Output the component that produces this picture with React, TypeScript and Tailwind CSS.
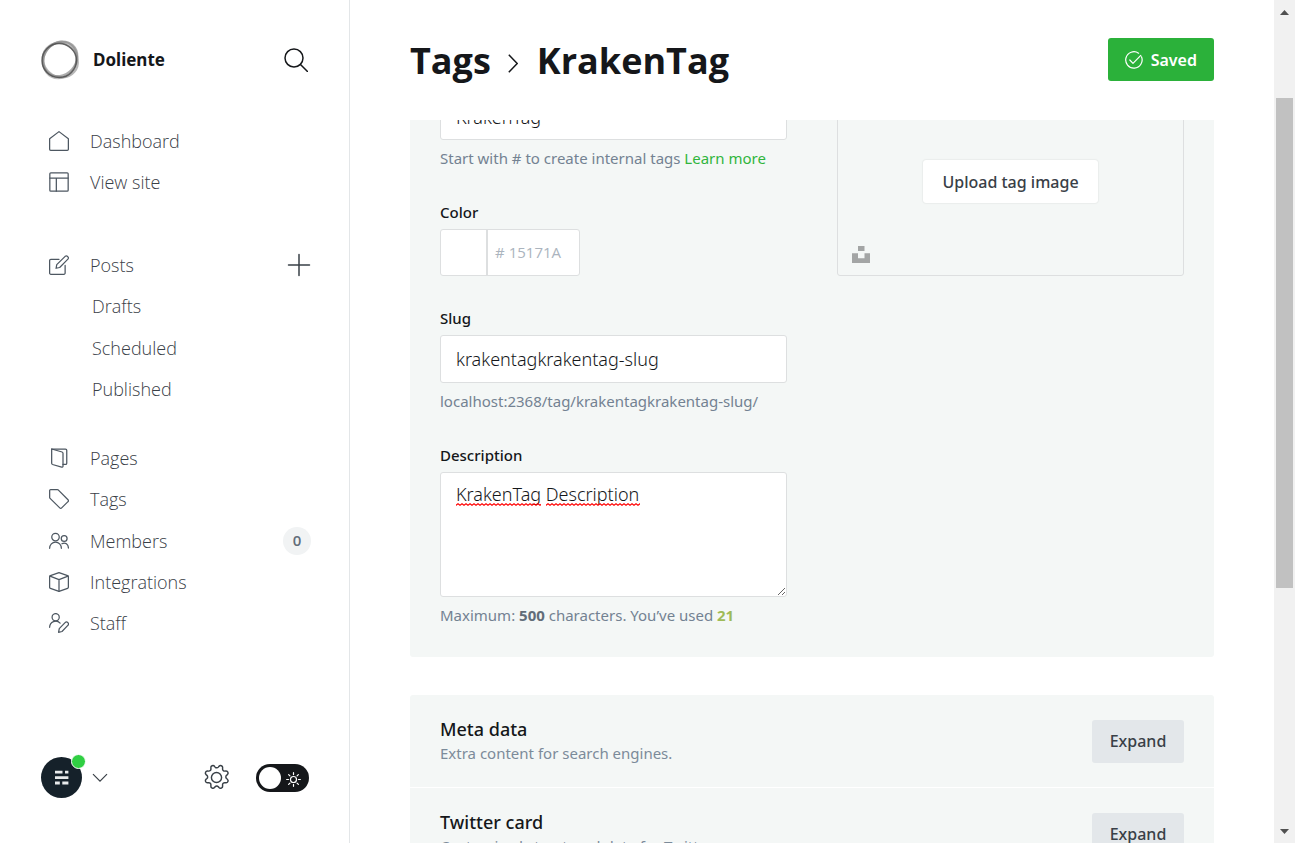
import React, { useState } from 'react';

type IconProps = { children: React.ReactNode; className?: string };

function Icon({ children, className = 'size-5' }: IconProps) {
  return (
    <svg
      viewBox="0 0 24 24"
      fill="none"
      stroke="currentColor"
      strokeWidth="1.5"
      strokeLinecap="round"
      strokeLinejoin="round"
      className={className}
      aria-hidden="true"
    >
      {children}
    </svg>
  );
}

const icons = {
  dashboard: <path d="M.75 9.2 12 .75 23.25 9.2v12.8a1.2 1.2 0 0 1-1.2 1.2H1.95A1.2 1.2 0 0 1 .75 22z" />,
  site: (
    <>
      <rect x="1" y="1" width="22" height="22" rx="1.2" />
      <path d="M1 7.2h22M8.8 7.2V23" />
    </>
  ),
  posts: (
    <>
      <path d="M12 5.2H2.2A1.5 1.5 0 0 0 .75 6.7v14.9a1.5 1.5 0 0 0 1.5 1.6h15.6a1.5 1.5 0 0 0 1.5-1.6v-9" />
      <path d="m12.8 15-4.3.9.8-4.3L19.4 1.6a2.4 2.4 0 0 1 3.3 3.4z" />
    </>
  ),
  pages: (
    <>
      <path d="M3.2 1.2v17.2c0 .7.4 1.2 1 1.4l11 3.2c.8.2 1.6-.3 1.6-1.2V6.2c0-.7-.4-1.2-1.1-1.4z" />
      <path d="M3.2 1.2h16.6a1.5 1.5 0 0 1 1.5 1.5v15.5a1.5 1.5 0 0 1-1.5 1.5h-3" />
    </>
  ),
  tags: <path d="M.8 1.9v8.2c0 .5.2.9.5 1.2l11.6 11.3c.7.7 1.7.7 2.3 0l7.6-7.4c.7-.6.7-1.6 0-2.3L11.3 1.3A2 2 0 0 0 10 .8H1.9A1.1 1.1 0 0 0 .8 1.9z" />,
  members: (
    <>
      <circle cx="7.8" cy="7.3" r="4.5" />
      <path d="M.75 20.8a7.05 7.6 0 0 1 14.1 0" />
      <circle cx="18.2" cy="9" r="3.5" />
      <path d="M15.5 15.3c4-2.3 7.8.8 7.8 5.1" />
    </>
  ),
  integrations: (
    <>
      <path d="M12 .8 22.3 4.4c.6.2.95.6.95 1.2v12.8c0 .6-.4 1-.95 1.2L12 23.2 1.7 19.6a1.2 1.2 0 0 1-.95-1.2V5.6c0-.6.35-1 .95-1.2z" />
      <path d="M1.2 5 12 9.2 22.8 5M12 9.2v14" />
    </>
  ),
  staff: (
    <>
      <circle cx="8" cy="5" r="4.3" />
      <path d="M.75 17.2a7.3 7.5 0 0 1 12.6-5.1" />
      <path d="m11.5 23.2.8-4.4 7-7.3a2.3 2.3 0 0 1 3.3 3.4l-7 7.3z" />
    </>
  ),
};

type NavItemProps = { label: string; icon?: React.ReactNode; trailing?: React.ReactNode };

function NavItem({ label, icon, trailing }: NavItemProps) {
  return (
    <li className="flex flex-1 items-center justify-between">
      <a href="#" className="flex flex-1 items-center text-[18px] leading-6 font-light text-[#394047]">
        {icon ? <Icon className="mr-[21px] size-5 text-[#4d5761]">{icon}</Icon> : <span className="w-[43px]" />}
        {label}
      </a>
      {trailing}
    </li>
  );
}

function Sidebar() {
  const [dark, setDark] = useState(false);
  return (
    <aside className="flex w-[350px] shrink-0 flex-col justify-between border-r border-[#e3e6e8] bg-white">
      <div>
        <div className="flex h-[120px] items-center pr-[41px] pl-10">
          <svg viewBox="0 0 40 40" className="size-10" fill="none" aria-hidden="true">
            <ellipse cx="20.9" cy="19.4" rx="18.4" ry="15.9" stroke="#777" strokeOpacity=".6" strokeWidth="2.4" transform="rotate(-48 20 20)" />
            <ellipse cx="20" cy="20" rx="18.6" ry="16.4" stroke="#888" strokeOpacity=".55" strokeWidth="2.2" transform="rotate(-62 20 20)" />
            <ellipse cx="20.4" cy="19.9" rx="18.2" ry="16.4" stroke="#888" strokeOpacity=".6" strokeWidth="2.2" transform="rotate(40 20 20)" />
            <ellipse cx="19.2" cy="20.5" rx="17.2" ry="17" stroke="#444" strokeOpacity=".75" strokeWidth="1.5" />
          </svg>
          <span className="ml-[13px] flex-1 font-['Noto_Sans',sans-serif] text-[17px] font-bold text-[#15171a]">Doliente</span>
          <button type="button" aria-label="Search" className="text-[#15171a]">
            <Icon className="size-6">
              <circle cx="10" cy="10" r="9" />
              <path d="m16.5 16.5 7 7" />
            </Icon>
          </button>
        </div>
        <nav className="flex flex-col pr-[38px] pl-[49px]">
          <ul className="flex h-[83px] flex-col">
            <NavItem label="Dashboard" icon={icons.dashboard} />
            <NavItem label="View site" icon={icons.site} />
          </ul>
          <ul className="mt-[41px] flex h-[166px] flex-col">
            <NavItem
              label="Posts"
              icon={icons.posts}
              trailing={
                <button type="button" aria-label="New post" className="text-[#394047]">
                  <Icon className="size-6">
                    <path d="M12 1.5v21M1.5 12h21" />
                  </Icon>
                </button>
              }
            />
            <NavItem label="Drafts" />
            <NavItem label="Scheduled" />
            <NavItem label="Published" />
          </ul>
          <ul className="mt-[27px] flex h-[207px] flex-col">
            <NavItem label="Pages" icon={icons.pages} />
            <NavItem label="Tags" icon={icons.tags} />
            <NavItem
              label="Members"
              icon={icons.members}
              trailing={
                <span className="flex size-7 items-center justify-center rounded-full bg-[#f1f3f4] text-[15px] font-semibold text-[#626d79]">
                  0
                </span>
              }
            />
            <NavItem label="Integrations" icon={icons.integrations} />
            <NavItem label="Staff" icon={icons.staff} />
          </ul>
        </nav>
      </div>
      <div className="flex items-center pr-10 pb-[45px] pl-[41px]">
        <button type="button" aria-label="Account menu" className="flex items-center gap-[10px] text-[#394047]">
          <span className="relative block size-[41px]">
            <svg viewBox="0 0 41 41" className="size-full" aria-hidden="true">
              <circle cx="20.5" cy="20.5" r="20.5" fill="#15212a" />
              <path
                d="M14 13.7h7.5v2.8H14zM24 13.7h3.4v2.8H24zM14 19.2h13.4v2.8H14zM14 24.6h4.8v2.8H14zM21.3 24.6h6.1v2.8h-6.1z"
                fill="#e8eaeb"
              />
            </svg>
            <span className="absolute -top-[3px] -right-1 size-[15px] rounded-full border border-white bg-[#30cf43]" />
          </span>
          <svg viewBox="0 0 16 10" className="h-[10px] w-4" fill="none" stroke="currentColor" strokeWidth="1.2" aria-hidden="true">
            <path d="m1 1.2 7 7 7-7" />
          </svg>
        </button>
        <a href="#" aria-label="Settings" className="mr-[26px] ml-auto text-[#394047]">
          <svg viewBox="0 0 26 26" className="size-[27px]" fill="none" stroke="currentColor" strokeWidth="1.4" strokeLinejoin="round" aria-hidden="true">
            <circle cx="13" cy="13" r="4.9" />
            <path d="M11.1 2.1a2 2 0 0 1 3.8 0l.3 1a2.1 2.1 0 0 0 2.8 1.2l.9-.5a2 2 0 0 1 2.7 2.7l-.5.9a2.1 2.1 0 0 0 1.2 2.8l1 .3a2 2 0 0 1 0 3.8l-1 .3a2.1 2.1 0 0 0-1.2 2.8l.5.9a2 2 0 0 1-2.7 2.7l-.9-.5a2.1 2.1 0 0 0-2.8 1.2l-.3 1a2 2 0 0 1-3.8 0l-.3-1A2.1 2.1 0 0 0 8 20.5l-.9.5a2 2 0 0 1-2.7-2.7l.5-.9a2.1 2.1 0 0 0-1.2-2.8l-1-.3a2 2 0 0 1 0-3.8l1-.3A2.1 2.1 0 0 0 4.9 7.4l-.5-.9a2 2 0 0 1 2.7-2.7l.9.5a2.1 2.1 0 0 0 2.8-1.2z" transform="rotate(22.5 13 13)" />
          </svg>
        </a>
        <button
          type="button"
          role="switch"
          aria-checked={dark}
          aria-label="Dark mode"
          onClick={() => setDark(!dark)}
          className="flex h-7 w-[53px] items-center justify-between rounded-full bg-[#15171a] pr-2 pl-[3px]"
        >
          <span className="size-[22px] rounded-full bg-white" />
          <svg viewBox="0 0 16 16" className="mt-[3px] size-[15px]" fill="none" stroke="#fff" strokeWidth="1.3" strokeLinecap="round" aria-hidden="true">
            <circle cx="8" cy="8" r="3.2" />
            <path d="M8 .7v2M8 13.3v2M.7 8h2M13.3 8h2M2.8 2.8l1.4 1.4M11.8 11.8l1.4 1.4M2.8 13.2l1.4-1.4M11.8 4.2l1.4-1.4" />
          </svg>
        </button>
      </div>
    </aside>
  );
}

const labelClass = "font-['Noto_Sans',sans-serif] text-[15px] leading-6 font-medium text-[#15171a]";
const hintClass = "mt-[6px] font-['Noto_Sans',sans-serif] text-[15px] leading-6 whitespace-nowrap text-[#738292]";
const fieldClass =
  "block w-full rounded-[3px] border border-[#dddfe0] bg-white px-[15px] font-['Noto_Sans',sans-serif] text-[18px] font-light text-[#15171a] outline-none";

function Squiggle({ id, className }: { id: string; className: string }) {
  return (
    <svg className={className} aria-hidden="true">
      <defs>
        <pattern id={id} width="4" height="3" patternUnits="userSpaceOnUse">
          <path d="M-1 1.5 0 2.2 2 .7 4 2.2 5 1.5" fill="none" stroke="#f00" strokeWidth="1.1" />
        </pattern>
      </defs>
      <rect width="100%" height="3" fill={`url(#${id})`} />
    </svg>
  );
}

function TagForm() {
  const [name, setName] = useState('KrakenTag');
  const [slug, setSlug] = useState('krakentagkrakentag-slug');
  const [color, setColor] = useState('');
  const [description, setDescription] = useState('KrakenTag Description');
  return (
    <section className="grid grid-cols-2 gap-[50px] rounded-[3px] bg-[#f4f7f6] p-[30px]">
      <div className="flex flex-col gap-[30px]">
        <div>
          <input aria-label="Name" value={name} onChange={(e) => setName(e.target.value)} className={`h-[47px] ${fieldClass}`} />
          <p className={hintClass}>
            Start with # to create internal tags <a href="#" className="text-[#30b53c]">Learn more</a>
          </p>
        </div>
        <div>
          <label htmlFor="tag-color" className={`mb-[5px] block ${labelClass}`}>Color</label>
          <div className="flex h-[47px] w-[140px] overflow-hidden rounded-[3px] border border-[#dddfe0] bg-white">
            <span className="w-[47px] shrink-0 border-r-2 border-[#dddfe0]" />
            <span className="flex min-w-0 flex-1 items-center gap-1 pl-[7px] text-[15px] text-[#abb4be]">
              #
              <input
                id="tag-color"
                value={color}
                placeholder="15171A"
                onChange={(e) => setColor(e.target.value)}
                className="w-full min-w-0 text-[15px] outline-none placeholder:text-[#abb4be]"
              />
            </span>
          </div>
        </div>
        <div>
          <label htmlFor="tag-slug" className={`mb-[5px] block ${labelClass}`}>Slug</label>
          <input id="tag-slug" value={slug} onChange={(e) => setSlug(e.target.value)} className={`h-12 ${fieldClass}`} />
          <p className={hintClass}>localhost:2368/tag/{slug}/</p>
        </div>
        <div>
          <label htmlFor="tag-description" className={`mb-[5px] block ${labelClass}`}>Description</label>
          <div className="relative">
            <textarea
              id="tag-description"
              spellCheck={false}
              value={description}
              onChange={(e) => setDescription(e.target.value)}
              className={`h-[125px] resize py-[9px] leading-6 ${fieldClass}`}
            />
            <Squiggle id="wave-a" className="absolute top-[31px] left-4 h-[3px] w-[85px]" />
            <Squiggle id="wave-b" className="absolute top-[31px] left-[106px] h-[3px] w-[94px]" />
          </div>
          <p className={hintClass}>
            Maximum: <b className="text-[#626d79]">500</b> characters. You’ve used <b className="text-[#9fbb58]">21</b>
          </p>
        </div>
      </div>
      <div>
        <div className="relative flex h-[183px] items-center justify-center rounded-[3px] border border-[#dddfe0] pb-[6px]">
          <button
            type="button"
            className="h-[43px] rounded-[3px] bg-white px-[19px] font-['Noto_Sans',sans-serif] text-[16px] font-medium whitespace-nowrap text-[#394047] shadow-[0_0_2px_rgba(0,0,0,0.14)]"
          >
            Upload tag image
          </button>
          <button type="button" aria-label="Choose from Unsplash" className="absolute bottom-3 left-[14px] text-[#a3a5a5]">
            <svg viewBox="0 0 18 17" className="h-[17px] w-[18px]" fill="currentColor" aria-hidden="true">
              <path d="M6 0h6.5v5H6zM0 7.3h6v5h6.5v-5H18V17H0z" />
            </svg>
          </button>
        </div>
      </div>
    </section>
  );
}

const extras = [
  { title: 'Meta data', text: 'Extra content for search engines.' },
  { title: 'Twitter card', text: 'Customized structured data for Twitter' },
];

function Scrollbar() {
  return (
    <div className="flex w-[21px] shrink-0 flex-col items-center justify-between bg-[#f1f1f1]" aria-hidden="true">
      <svg viewBox="0 0 9 5" className="mt-[10px] h-[5px] w-[9px]" fill="#505050">
        <path d="M0 5 4.5 0 9 5z" />
      </svg>
      <div className="flex w-full flex-1 flex-col items-center pt-[83px]">
        <div className="h-[490px] w-[17px] bg-[#c1c1c1]" />
      </div>
      <svg viewBox="0 0 9 5" className="mb-[9px] h-[5px] w-[9px]" fill="#505050">
        <path d="M0 0 4.5 5 9 0z" />
      </svg>
    </div>
  );
}

export default function App() {
  return (
    <div className="flex h-screen overflow-hidden bg-white font-['Open_Sans','Noto_Sans',sans-serif]">
      <Sidebar />
      <main className="flex min-w-0 flex-1 flex-col px-[60px]">
        <header className="flex h-[120px] shrink-0 items-center justify-between pb-px">
          <h2 className="flex items-center pt-[2px] text-[36px] font-bold text-[#15171a]">
            <a href="#">Tags</a>
            <svg viewBox="0 0 10 19" className="mr-[19px] ml-[17px] mt-[6px] h-[19px] w-[10px]" fill="none" stroke="currentColor" strokeWidth="1.5" aria-hidden="true">
              <path d="m.8.8 8.4 8.7-8.4 8.7" />
            </svg>
            KrakenTag
          </h2>
          <button type="button" className="flex h-[43px] items-center gap-2 rounded-[3px] bg-[#2bb13a] px-[17px] font-['Noto_Sans',sans-serif] text-[16px] font-semibold text-white">
            <svg viewBox="0 0 18 18" className="size-[18px]" fill="none" stroke="currentColor" strokeWidth="1.2" strokeLinecap="round" strokeLinejoin="round" aria-hidden="true">
              <path d="M16.5 5.8A8.2 8.2 0 1 1 13.6 2.2" />
              <path d="m4.8 9 3.2 3.4 7.8-8" />
            </svg>
            Saved
          </button>
        </header>
        <div className="min-h-0 flex-1 overflow-hidden">
          <div className="-mt-[57px]">
            <TagForm />
            <section className="mt-[38px] rounded-[3px] bg-[#f4f7f6]">
              {extras.map(({ title, text }) => (
                <div key={title} className="flex items-center justify-between border-b border-white px-[30px] py-[22px]">
                  <div>
                    <h4 className="font-['Noto_Sans',sans-serif] text-[18px] leading-6 font-medium text-[#15171a]">{title}</h4>
                    <p className="font-['Noto_Sans',sans-serif] text-[15px] leading-6 text-[#7c8b9a]">{text}</p>
                  </div>
                  <button type="button" className="h-[43px] w-[92px] rounded-[3px] bg-[#e3e7ea] font-['Noto_Sans',sans-serif] text-[16px] font-medium text-[#394047]">
                    Expand
                  </button>
                </div>
              ))}
            </section>
          </div>
        </div>
      </main>
      <Scrollbar />
    </div>
  );
}
